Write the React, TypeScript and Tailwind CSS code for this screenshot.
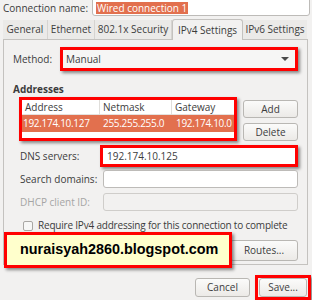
import React from 'react';

const font = { fontFamily: '"Open Sans", "DejaVu Sans", sans-serif' };

const redBox = 'border-[3px] border-[#ff0000] shadow-[2px_2px_3px_rgba(0,0,0,0.45)]';

const Button = ({ label, className = '' }: { label: string; className?: string }) => (
  <div
    className={`flex items-center justify-center rounded-[3px] border border-[#b9b7b3] bg-gradient-to-b from-[#fbfbfa] to-[#eceae7] text-[10px] text-[#3c3c3c] ${className}`}
  >
    {label}
  </div>
);

const Field = ({ label, disabled = false }: { label: string; disabled?: boolean }) => (
  <div className="flex items-center h-[18px]">
    <span className={`w-[90px] pl-[7px] text-[10px] ${disabled ? 'text-[#a5a5a5]' : 'text-[#3c3c3c]'}`}>{label}</span>
    <div className={`flex-1 h-[18px] rounded-[3px] border ${disabled ? 'border-[#cfcdca] bg-[#f2f1f0]' : 'border-[#bdbbb8] bg-white'}`} />
  </div>
);

const tabs = [
  { name: 'General', w: 'w-[45px]' },
  { name: 'Ethernet', w: 'w-[47px]' },
  { name: '802.1x Security', w: 'w-[77px]' },
  { name: 'IPv4 Settings', w: 'w-[71px]' },
  { name: 'IPv6 Settings', w: 'w-[64px]' },
];

const App = () => {
  return (
    <div style={font} className="relative w-[312px] h-[300px] overflow-hidden whitespace-nowrap bg-[#f2f1f0] text-[#3c3c3c]">
      {/* connection name */}
      <div className="flex items-center h-[19px] -mt-[3px]">
        <span className="w-[92px] pl-[3px] pt-[3px] text-[10px]">Connection name:</span>
        <div className="flex-1 mr-[2px] h-[19px] rounded-[3px] border border-[#bdbbb8] bg-white flex items-center pl-[3px] pt-[2px]">
          <span className="bg-[#e2704e] text-white text-[10px] leading-[12px] px-[1px]">Wired connection 1</span>
        </div>
      </div>

      {/* tabs */}
      <div className="mt-[4px] ml-[3px] mr-[4px] flex h-[20px] border-b border-[#c4c2bf]">
        {tabs.map((t) => {
          const active = t.name === 'IPv4 Settings';
          return (
            <div
              key={t.name}
              className={
                active
                  ? `${t.w} flex items-center justify-center h-[21px] -mb-[1px] -mt-[1px] border border-b-0 border-[#c4c2bf] rounded-t-[3px] bg-[#f2f1f0] text-[10px]`
                  : `${t.w} flex items-center justify-center border-r border-[#d6d4d1] last:border-r-0 bg-[#ebeae8] text-[10px]`
              }
            >
              {t.name}
            </div>
          );
        })}
      </div>

      {/* panel */}
      <div className="ml-[3px] mr-[4px] h-[225px] border border-t-0 border-[#c4c2bf] px-[9px] pt-[7px]">
        <div className="flex items-center h-[24px]">
          <span className="w-[47px] text-[10px]">Method:</span>
          <div className={`flex-1 h-[24px] bg-[#f6f6f5] flex items-center justify-between pl-[3px] pr-[6px] ${redBox}`}>
            <span className="text-[10px]">Manual</span>
            <span className="w-0 h-0 border-l-[4px] border-r-[4px] border-t-[4px] border-l-transparent border-r-transparent border-t-[#4a4a4a]" />
          </div>
        </div>

        <div className="mt-[12px] text-[10px] font-bold leading-[13px]">Addresses</div>

        <div className="flex mt-[1px] pl-[6px]">
          <div className={`w-[221px] h-[44px] bg-white ${redBox}`}>
            <div className="flex h-[15px] items-center text-[10px] border-b border-[#e4e2df]">
              <span className="w-[78px] pl-[3px] border-r border-[#e0dedb]">Address</span>
              <span className="w-[72px] pl-[3px] border-r border-[#e0dedb]">Netmask</span>
              <span className="pl-[3px]">Gateway</span>
            </div>
            <div className="flex h-[17px] items-center bg-[#e2704e] text-white text-[10px] tracking-[-0.3px]">
              <span className="w-[78px] pl-[1px]">192.174.10.127</span>
              <span className="w-[72px] pl-[3px]">255.255.255.0</span>
              <span className="pl-[4px]">192.174.10.0</span>
            </div>
          </div>
          <div className="ml-[6px] mt-[3px] flex flex-col gap-[5px]">
            <Button label="Add" className="w-[55px] h-[18px]" />
            <Button label="Delete" className="w-[55px] h-[18px]" />
          </div>
        </div>

        <div className="flex items-center h-[22px] mt-[4px]">
          <span className="w-[87px] pl-[7px] text-[10px]">DNS servers:</span>
          <div className={`flex-1 h-[22px] bg-white flex items-center pl-[4px] ${redBox}`}>
            <span className="text-[10px]">192.174.10.125</span>
          </div>
        </div>

        <div className="mt-[3px] flex flex-col gap-[5px]">
          <Field label="Search domains:" />
          <Field label="DHCP client ID:" disabled />
        </div>

        <div className="flex items-center mt-[7px] pl-[10px] gap-[5px]">
          <span className="w-[10px] h-[10px] rounded-[2px] border border-[#a9a7a4] bg-[#f7f7f6]" />
          <span className="text-[10px] tracking-[-0.2px]">Require IPv4 addressing for this connection to complete</span>
        </div>

        <div className="flex justify-end mt-[7px]">
          <Button label="Routes..." className="w-[68px] h-[21px]" />
        </div>
      </div>

      {/* dialog buttons */}
      <div className="flex justify-end items-center mt-[10px] mr-[1px] gap-[5px]">
        <Button label="Cancel" className="w-[55px] h-[19px]" />
        <div className={`w-[56px] h-[25px] flex items-center justify-center ${redBox}`}>
          <Button label="Save..." className="w-[48px] h-[19px]" />
        </div>
      </div>

      {/* watermark annotation */}
      <div
        className={`absolute left-[4px] top-[232px] w-[228px] h-[36px] bg-[#ffffcc] flex items-center pl-[13px] text-[14.4px] font-bold text-black ${redBox}`}
        style={{ fontFamily: '"Liberation Sans", Arial, sans-serif' }}
      >
        nuraisyah2860.blogspot.com
      </div>
    </div>
  );
};

export default App;
